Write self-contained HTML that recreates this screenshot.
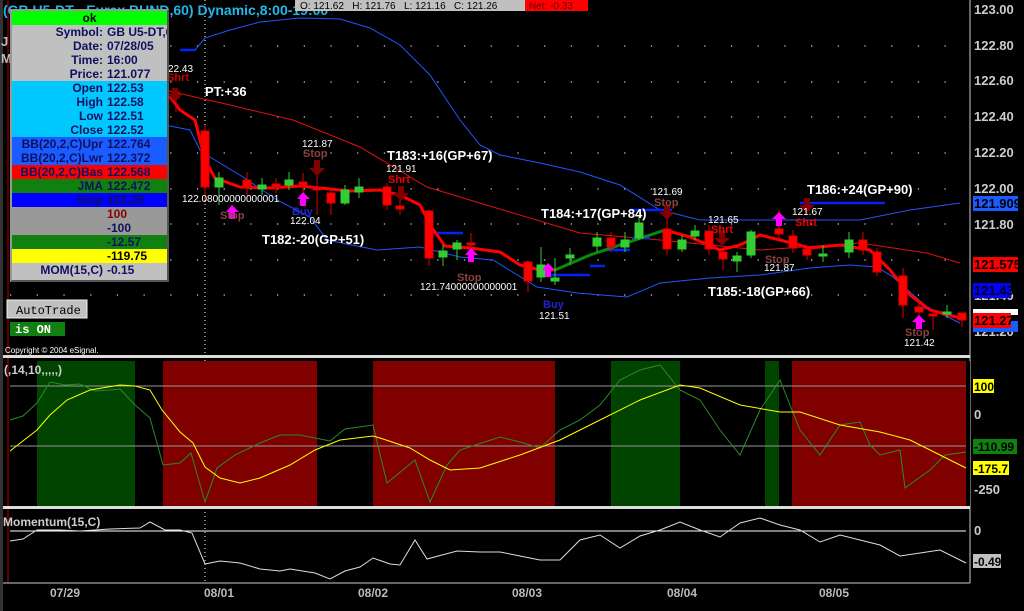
<!DOCTYPE html>
<html><head><meta charset="utf-8"><style>
body{margin:0;background:#000;width:1024px;height:611px;overflow:hidden;font-family:"Liberation Sans",sans-serif}
svg{position:absolute;left:0;top:0}
.box{position:absolute;left:10px;top:9px;width:155px;height:269px;border:2px solid #999;border-right-color:#555;border-bottom-color:#555;background:#c0c0c0}
.box div{height:14px;line-height:14px;font-size:12px;font-weight:bold;color:#101060;text-align:left;white-space:nowrap;overflow:hidden}
.box span{display:inline-block;width:91px;text-align:right;margin-right:4px}
</style></head><body>
<svg width="1024" height="611" font-family="Liberation Sans, sans-serif">
<g stroke="#ccc" stroke-width="1.3" stroke-dasharray="1.3 25.4">
<line x1="10" y1="46" x2="970" y2="46"/><line x1="10" y1="82" x2="970" y2="82"/><line x1="10" y1="117" x2="970" y2="117"/>
<line x1="10" y1="153" x2="970" y2="153"/><line x1="10" y1="189" x2="970" y2="189"/><line x1="10" y1="224" x2="970" y2="224"/>
<line x1="10" y1="260" x2="970" y2="260"/><line x1="10" y1="295" x2="970" y2="295"/>
</g>
<line x1="205" y1="0" x2="205" y2="583" stroke="#fff" stroke-dasharray="1 3"/>
<line x1="970" y1="0" x2="970" y2="583" stroke="#ccc"/>
<rect x="0" y="0" width="3" height="611" fill="#333"/>
<line x1="8" y1="0" x2="8" y2="583" stroke="#b00"/>
<rect x="3" y="355" width="967" height="3" fill="#ddd"/>
<rect x="3" y="506" width="967" height="3" fill="#ddd"/>
<line x1="3" y1="583" x2="970" y2="583" stroke="#ccc"/>
<rect x="10" y="361" width="960" height="145" fill="#000"/>
<rect x="37" y="361" width="98" height="145" fill="#004400"/>
<rect x="163" y="361" width="154" height="145" fill="#800000"/>
<rect x="373" y="361" width="182" height="145" fill="#800000"/>
<rect x="611" y="361" width="69" height="145" fill="#004400"/>
<rect x="765" y="361" width="14" height="145" fill="#004400"/>
<rect x="792" y="361" width="174" height="145" fill="#800000"/>
<line x1="10" y1="386" x2="966" y2="386" stroke="#999"/>
<line x1="10" y1="446" x2="966" y2="446" stroke="#999"/>
<polyline fill="none" stroke="#2a8a2a" points="10,420 23,416 37,403 50,382 65,385 80,384 95,391 110,390 120,389 135,405 150,418 163,465 180,463 191,453 205,502 217,468 235,455 260,443 280,435 300,435 330,441 345,429 373,425 387,483 415,460 430,502 447,465 460,450 500,437 520,442 540,448 560,430 580,420 600,405 620,380 640,370 660,365 680,390 700,400 720,430 740,455 760,410 780,380 800,430 820,455 840,425 860,422 870,445 880,455 900,450 905,488 930,470 945,455 966,452"/>
<polyline fill="none" stroke="#ff0" points="10,451 37,430 50,415 67,400 90,390 120,385 135,386 150,390 162,410 180,432 193,443 205,467 220,478 240,483 260,478 290,465 315,450 340,440 373,436 380,438 410,448 430,460 450,470 480,468 520,455 560,440 600,420 640,400 680,385 700,388 740,405 780,412 800,412 840,425 880,432 910,440 940,455 966,468"/>
<line x1="10" y1="531" x2="966" y2="531" stroke="#fff"/>
<polyline fill="none" stroke="#ddd" points="10,541 23,539 37,530 60,530 80,531 110,529 140,528 150,522 165,530 180,530 192,533 205,564 220,561 240,563 260,569 280,571 290,569 315,573 330,579 345,571 360,567 373,558 390,564 400,565 415,540 427,559 457,551 480,552 500,552 520,556 540,560 560,560 580,540 600,535 620,548 640,536 660,530 680,522 700,530 720,537 740,523 760,518 780,525 800,530 820,542 840,535 860,540 880,545 900,556 920,553 940,550 966,563"/>
<polyline fill="none" stroke="#2255ff" points="180,50 195,50 205,38 230,30 260,22 300,18 340,19 370,28 400,45 430,75 460,120 480,145 500,155 540,163 580,172 620,185 660,210 700,220 760,220 860,220 910,210 960,203"/>
<polyline fill="none" stroke="#2255ff" points="160,124 190,130 200,150 210,157 243,177 277,200 310,217 327,240 377,250 420,247 460,257 493,260 537,287 577,293 627,297 660,283 710,278 760,275 810,268 850,265 877,267 893,277 927,307 960,323"/>
<polyline fill="none" stroke="#e01010" points="160,89 230,105 293,120 360,147 427,187 493,207 580,233 660,240 760,250 860,243 927,253 960,263"/>
<g stroke="#0022ff" stroke-width="2.5">
<line x1="180" y1="50" x2="195" y2="50"/><line x1="425" y1="233" x2="463" y2="233"/><line x1="545" y1="275" x2="590" y2="275"/>
<line x1="590" y1="266" x2="605" y2="266"/><line x1="603" y1="250" x2="630" y2="250"/><line x1="632" y1="238" x2="650" y2="238"/>
<line x1="630" y1="210" x2="672" y2="210"/><line x1="800" y1="203" x2="885" y2="203"/><line x1="918" y1="308" x2="930" y2="308"/>
</g>
<polyline fill="none" stroke="#f00" stroke-width="3" points="165,90 180,110 195,120 205,160 215,178 240,187 270,188 300,186 320,188 350,191 380,190 400,195 420,205 430,225 445,246 470,248 500,252 520,265 540,270 555,270"/>
<polyline fill="none" stroke="#0a8a0a" stroke-width="3" points="555,270 590,255 620,245 650,235 665,230"/>
<polyline fill="none" stroke="#f00" stroke-width="3" points="665,230 690,237 720,250 740,245 760,235 780,240 810,248 840,245 870,250 890,270 910,295 930,310 960,318"/>
<g stroke-width="1">
<g stroke="#d00" fill="#f00">
<line x1="176" y1="88" x2="176" y2="112"/><rect x="172" y="92" width="7" height="6"/>
<line x1="205" y1="125" x2="205" y2="200"/><rect x="201" y="131" width="8" height="56"/>
<line x1="247" y1="172" x2="247" y2="195"/><rect x="243" y="180" width="8" height="7"/>
<line x1="276" y1="178" x2="276" y2="193"/><rect x="272" y="184" width="8" height="3"/>
<line x1="303" y1="173" x2="303" y2="192"/><rect x="299" y="182" width="8" height="3"/>
<line x1="317" y1="175" x2="317" y2="215"/><rect x="313" y="187" width="8" height="3"/>
<line x1="331" y1="190" x2="331" y2="215"/><rect x="327" y="193" width="8" height="10"/>
<line x1="387" y1="183" x2="387" y2="210"/><rect x="383" y="187" width="8" height="18"/>
<line x1="400" y1="200" x2="400" y2="215"/><rect x="396" y="206" width="8" height="3"/>
<line x1="429" y1="210" x2="429" y2="266"/><rect x="425" y="211" width="8" height="47"/>
<line x1="471" y1="233" x2="471" y2="255"/><rect x="467" y="243" width="8" height="2"/>
<line x1="528" y1="260" x2="528" y2="292"/><rect x="524" y="262" width="8" height="19"/>
<line x1="611" y1="232" x2="611" y2="252"/><rect x="607" y="238" width="8" height="9"/>
<line x1="667" y1="220" x2="667" y2="255"/><rect x="663" y="229" width="8" height="20"/>
<line x1="709" y1="225" x2="709" y2="255"/><rect x="705" y="231" width="8" height="18"/>
<line x1="723" y1="250" x2="723" y2="270"/><rect x="719" y="252" width="8" height="7"/>
<line x1="779" y1="210" x2="779" y2="240"/><rect x="775" y="229" width="8" height="5"/>
<line x1="793" y1="230" x2="793" y2="253"/><rect x="789" y="236" width="8" height="12"/>
<line x1="807" y1="249" x2="807" y2="260"/><rect x="803" y="249" width="8" height="6"/>
<line x1="863" y1="232" x2="863" y2="255"/><rect x="859" y="240" width="8" height="10"/>
<line x1="877" y1="248" x2="877" y2="276"/><rect x="873" y="252" width="8" height="20"/>
<line x1="903" y1="268" x2="903" y2="318"/><rect x="899" y="276" width="8" height="29"/>
<line x1="919" y1="300" x2="919" y2="328"/><rect x="915" y="307" width="8" height="5"/>
<line x1="933" y1="310" x2="933" y2="330"/><rect x="929" y="314" width="8" height="2"/>
<line x1="962" y1="313" x2="962" y2="327"/><rect x="958" y="313" width="8" height="7"/>
</g>
<g stroke="#3c3" fill="#3c3">
<line x1="219" y1="172" x2="219" y2="205"/><rect x="215" y="178" width="8" height="9"/>
<line x1="262" y1="178" x2="262" y2="195"/><rect x="258" y="185" width="8" height="4"/>
<line x1="289" y1="172" x2="289" y2="190"/><rect x="285" y="180" width="8" height="5"/>
<line x1="345" y1="185" x2="345" y2="205"/><rect x="341" y="190" width="8" height="13"/>
<line x1="359" y1="178" x2="359" y2="198"/><rect x="355" y="187" width="8" height="5"/>
<line x1="443" y1="245" x2="443" y2="266"/><rect x="439" y="251" width="8" height="6"/>
<line x1="457" y1="240" x2="457" y2="260"/><rect x="453" y="243" width="8" height="6"/>
<line x1="541" y1="247" x2="541" y2="282"/><rect x="537" y="265" width="8" height="12"/>
<line x1="555" y1="258" x2="555" y2="285"/><rect x="551" y="278" width="8" height="3"/>
<line x1="570" y1="248" x2="570" y2="265"/><rect x="566" y="255" width="8" height="3"/>
<line x1="597" y1="232" x2="597" y2="252"/><rect x="593" y="238" width="8" height="8"/>
<line x1="625" y1="232" x2="625" y2="252"/><rect x="621" y="240" width="8" height="7"/>
<line x1="639" y1="215" x2="639" y2="240"/><rect x="635" y="223" width="8" height="15"/>
<line x1="682" y1="235" x2="682" y2="252"/><rect x="678" y="240" width="8" height="9"/>
<line x1="695" y1="225" x2="695" y2="240"/><rect x="691" y="231" width="8" height="5"/>
<line x1="737" y1="252" x2="737" y2="272"/><rect x="733" y="256" width="8" height="5"/>
<line x1="751" y1="230" x2="751" y2="258"/><rect x="747" y="232" width="8" height="23"/>
<line x1="823" y1="245" x2="823" y2="262"/><rect x="819" y="254" width="8" height="2"/>
<line x1="849" y1="232" x2="849" y2="258"/><rect x="845" y="240" width="8" height="12"/>
<line x1="947" y1="305" x2="947" y2="318"/><rect x="943" y="312" width="8" height="2"/>
</g>
</g>
<g fill="#ff00ff">
<path d="M226,212 L232,205 L239,212 L235,212 L235,219 L229,219 L229,212Z"/>
<path d="M297,199 L303,192 L310,199 L306,199 L306,206 L300,206 L300,199Z"/>
<path d="M465,255 L471,248 L478,255 L474,255 L474,262 L468,262 L468,255Z"/>
<path d="M542,270 L548,263 L555,270 L551,270 L551,277 L545,277 L545,270Z"/>
<path d="M772,219 L779,212 L786,219 L782,219 L782,226 L776,226 L776,219Z"/>
<path d="M912,322 L919,315 L926,322 L922,322 L922,329 L916,329 L916,322Z"/>
</g>
<g fill="#800000">
<path d="M172,88 L178,88 L178,94 L183,94 L175,102 L167,94 L172,94Z"/>
<path d="M314,160 L320,160 L320,168 L325,168 L317,176 L309,168 L314,168Z"/>
<path d="M398,186 L404,186 L404,193 L409,193 L401,201 L393,193 L398,193Z"/>
<path d="M664,205 L670,205 L670,212 L675,212 L667,220 L659,212 L664,212Z"/>
<path d="M719,231 L725,231 L725,238 L730,238 L722,246 L714,238 L719,238Z"/>
<path d="M804,198 L810,198 L810,205 L815,205 L807,213 L799,205 L804,205Z"/>
</g>
<g font-size="10" fill="#fff">
<text x="168" y="72">22.43</text><text x="182" y="202">122.08000000000001</text><text x="290" y="224">122.04</text>
<text x="302" y="147">121.87</text><text x="386" y="172">121.91</text><text x="420" y="290">121.74000000000001</text>
<text x="539" y="319">121.51</text><text x="652" y="195">121.69</text><text x="708" y="223">121.65</text>
<text x="764" y="271">121.87</text><text x="792" y="215">121.67</text><text x="904" y="346">121.42</text>
</g>
<g font-size="11" font-weight="bold">
<text x="167" y="81" fill="#c00">Shrt</text><text x="303" y="157" fill="#8b4040">Stop</text><text x="388" y="183" fill="#e00">Shrt</text>
<text x="220" y="219" fill="#8b4040">Stop</text><text x="292" y="215" fill="#2222cc">Buy</text><text x="457" y="281" fill="#8b4040">Stop</text>
<text x="543" y="308" fill="#2222cc">Buy</text><text x="654" y="206" fill="#8b4040">Stop</text><text x="711" y="233" fill="#e00">Shrt</text>
<text x="765" y="263" fill="#8b4040">Stop</text><text x="795" y="226" fill="#e00">Shrt</text><text x="905" y="336" fill="#8b4040">Stop</text>
</g>
<g font-size="13" font-weight="bold" fill="#fff">
<text x="205" y="96">PT:+36</text><text x="262" y="244">T182:-20(GP+51)</text><text x="387" y="160">T183:+16(GP+67)</text>
<text x="541" y="218">T184:+17(GP+84)</text><text x="708" y="296">T185:-18(GP+66)</text><text x="807" y="194">T186:+24(GP+90)</text>
</g>
<text x="3" y="15" font-size="14" font-weight="bold" fill="#20b8e8">(GB U5-DT - Eurex BUND,60) Dynamic,8:00-19:00</text>
<text x="1" y="46" font-size="13" font-weight="bold" fill="#bbb">J</text><text x="1" y="63" font-size="13" font-weight="bold" fill="#bbb">M</text>
<rect x="295" y="0" width="230" height="11" fill="#c0c0c0"/><rect x="525" y="0" width="63" height="11" fill="#f00"/>
<text x="300" y="9" font-size="10" fill="#000">O: 121.62&#160;&#160;&#160;H: 121.76&#160;&#160;&#160;L: 121.16&#160;&#160;&#160;C: 121.26</text>
<text x="529" y="9" font-size="10" fill="#600">Net: -0.33</text>
<rect x="7" y="300" width="80" height="18" fill="#c0c0c0" stroke="#eee"/>
<text x="16" y="314" font-family="Liberation Mono, monospace" font-size="12" fill="#000">AutoTrade</text>
<rect x="10" y="322" width="55" height="14" fill="#108010"/>
<text x="15" y="333" font-family="Liberation Mono, monospace" font-size="12" font-weight="bold" fill="#fff">is ON</text>
<text x="5" y="353" font-size="8" fill="#fff">Copyright © 2004 eSignal.</text>
<text x="4" y="374" font-size="12" font-weight="bold" fill="#ccc">(,14,10,,,,,)</text>
<text x="3" y="526" font-size="12" font-weight="bold" fill="#ccc">Momentum(15,C)</text>
<g font-size="13" font-weight="bold" fill="#ccc">
<text x="974" y="14">123.00</text><text x="974" y="50">122.80</text><text x="974" y="85">122.60</text><text x="974" y="121">122.40</text>
<text x="974" y="157">122.20</text><text x="974" y="193">122.00</text><text x="974" y="229">121.80</text><text x="974" y="300">121.40</text><text x="974" y="336">121.20</text>
<text x="974" y="419">0</text><text x="974" y="494">-250</text><text x="974" y="535">0</text>
</g>
<rect x="973" y="196" width="45" height="15" fill="#1a5cff"/><text x="974" y="208" font-size="13" font-weight="bold" fill="#000">121.909</text>
<rect x="973" y="257" width="45" height="15" fill="#f00"/><text x="974" y="269" font-size="13" font-weight="bold" fill="#000">121.575</text>
<rect x="973" y="283" width="38" height="15" fill="#0000ff"/><text x="974" y="295" font-size="13" font-weight="bold" fill="#000">121.43</text>
<rect x="973" y="309" width="45" height="6" fill="#fff"/><rect x="973" y="321" width="45" height="11" fill="#1a5cff"/>
<rect x="973" y="313" width="38" height="15" fill="#f00"/><text x="974" y="325" font-size="13" font-weight="bold" fill="#000">121.27</text>
<rect x="973" y="379" width="21" height="14" fill="#ff0"/><text x="974" y="391" font-size="12" font-weight="bold" fill="#000">100</text>
<rect x="973" y="439" width="44" height="15" fill="#108010"/><text x="974" y="451" font-size="12" font-weight="bold" fill="#000">-110.99</text>
<rect x="973" y="461" width="36" height="14" fill="#ff0"/><text x="974" y="473" font-size="12" font-weight="bold" fill="#000">-175.7</text>
<rect x="973" y="554" width="28" height="14" fill="#c0c0c0"/><text x="974" y="566" font-size="12" font-weight="bold" fill="#000">-0.49</text>
<g font-size="12" font-weight="bold" fill="#bbb">
<text x="50" y="597">07/29</text><text x="204" y="597">08/01</text><text x="358" y="597">08/02</text>
<text x="512" y="597">08/03</text><text x="667" y="597">08/04</text><text x="819" y="597">08/05</text>
</g>
</svg>
<div class="box">
<div style="background:#00ff00;color:#000;text-align:center">ok</div>
<div><span>Symbol:</span>GB U5-DT,60</div>
<div><span>Date:</span>07/28/05</div>
<div><span>Time:</span>16:00</div>
<div><span>Price:</span>121.077</div>
<div style="background:#00c8ff"><span>Open</span>122.53</div>
<div style="background:#00c8ff"><span>High</span>122.58</div>
<div style="background:#00c8ff"><span>Low</span>122.51</div>
<div style="background:#00c8ff"><span>Close</span>122.52</div>
<div style="background:#1a5cff"><span>BB(20,2,C)Upr</span>122.764</div>
<div style="background:#1a5cff"><span>BB(20,2,C)Lwr</span>122.372</div>
<div style="background:#f00"><span>BB(20,2,C)Bas</span>122.568</div>
<div style="background:#108010"><span>JMA</span>122.472</div>
<div style="background:#0000ff"><span>Stop</span>122.29</div>
<div style="background:#999;color:#800"><span></span>100</div>
<div style="background:#999"><span></span>-100</div>
<div style="background:#108010"><span></span>-12.57</div>
<div style="background:#ff0;color:#000"><span></span>-119.75</div>
<div style="background:#c0c0c0"><span>MOM(15,C)</span>-0.15</div>
</div>
</body></html>
